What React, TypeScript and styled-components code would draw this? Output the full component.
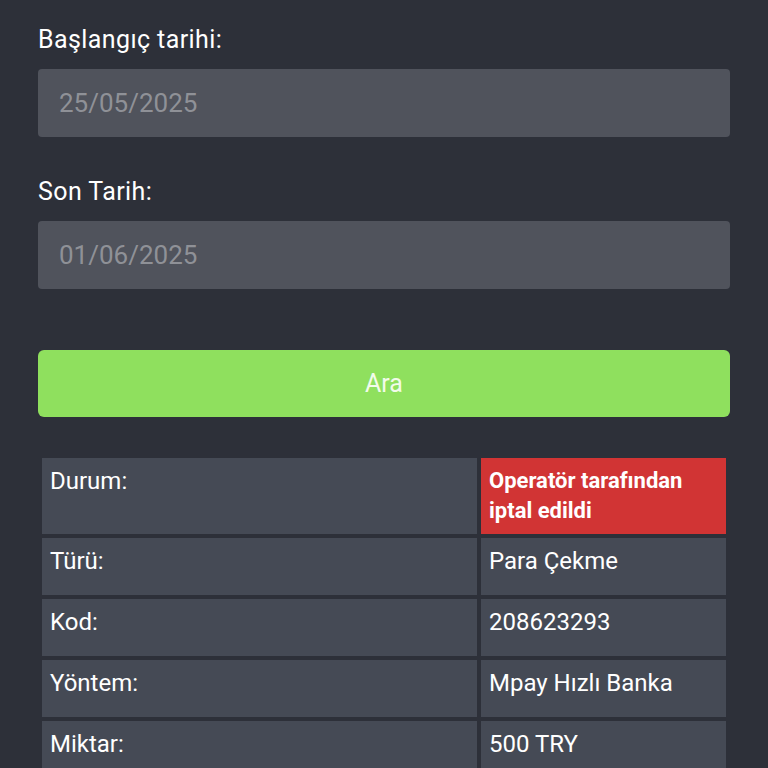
import React from "react";
import styled, { createGlobalStyle } from "styled-components";

const Global = createGlobalStyle`
  html, body {
    margin: 0;
    padding: 0;
    background: #2d3039;
  }
  body {
    font-family: Roboto, "Noto Sans", "Liberation Sans", sans-serif;
    color: #ffffff;
  }
  * { box-sizing: border-box; }
`;

const Page = styled.div`
  padding: 23px 38px 0 38px;
  display: flex;
  flex-direction: column;
`;

const Field = styled.div<{ $mb: number }>`
  display: flex;
  flex-direction: column;
  margin-bottom: ${(p) => p.$mb}px;
`;

const Label = styled.label`
  font-size: 25px;
  letter-spacing: 0.4px;
  line-height: 34px;
  color: #ffffff;
  margin-bottom: 12px;
`;

const DateInput = styled.div`
  height: 68px;
  background: #50535c;
  border-radius: 4px;
  display: flex;
  align-items: center;
  padding-left: 21px;
  font-size: 26px;
  color: #8f9197;
`;

const SearchButton = styled.button`
  height: 67px;
  width: 100%;
  border: none;
  border-radius: 6px;
  background: #8fe05e;
  color: #f2fbeb;
  font-family: Roboto, "Noto Sans", sans-serif;
  font-size: 25px;
  font-weight: 400;
  display: flex;
  align-items: center;
  justify-content: center;
  padding: 0;
  margin-bottom: 37px;
`;

const Table = styled.table`
  width: 100%;
  border-collapse: separate;
  border-spacing: 4px;
  table-layout: fixed;
`;

const Cell = styled.td<{ $status?: boolean; $wide?: boolean }>`
  background: ${(p) => (p.$status ? "#d13434" : "#454a55")};
  color: #ffffff;
  font-size: ${(p) => (p.$status ? "22px" : "24px")};
  font-weight: ${(p) => (p.$status ? 700 : 400)};
  line-height: 30px;
  padding: 8px 8px;
  height: 57px;
  vertical-align: top;
  width: ${(p) => (p.$wide ? "435px" : "auto")};
`;

const rows: [string, string][] = [
  ["Türü:", "Para Çekme"],
  ["Kod:", "208623293"],
  ["Yöntem:", "Mpay Hızlı Banka"],
  ["Miktar:", "500 TRY"],
];

export default function App() {
  return (
    <>
      <Global />
      <Page>
        <Field $mb={38}>
          <Label>Başlangıç tarihi:</Label>
          <DateInput>25/05/2025</DateInput>
        </Field>
        <Field $mb={61}>
          <Label>Son Tarih:</Label>
          <DateInput>01/06/2025</DateInput>
        </Field>
        <SearchButton>Ara</SearchButton>
        <Table>
          <tbody>
            <tr>
              <Cell $wide>Durum:</Cell>
              <Cell $status>
                Operatör tarafından
                <br />
                iptal edildi
              </Cell>
            </tr>
            {rows.map(([k, v]) => (
              <tr key={k}>
                <Cell $wide>{k}</Cell>
                <Cell>{v}</Cell>
              </tr>
            ))}
          </tbody>
        </Table>
      </Page>
    </>
  );
}
